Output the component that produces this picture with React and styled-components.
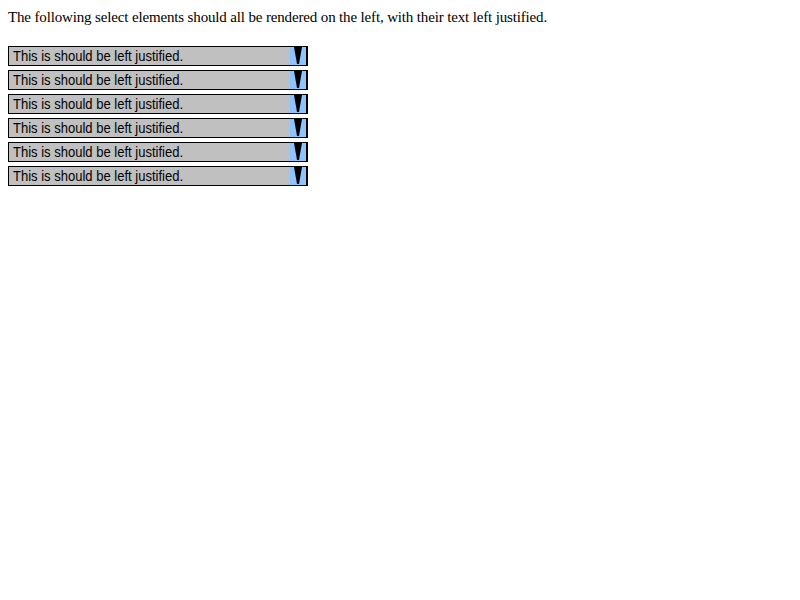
import React from "react";
import styled, { createGlobalStyle } from "styled-components";

const Global = createGlobalStyle`
  html, body { margin: 0; padding: 0; background: #fff; }
  body { padding: 8px; font-family: "Liberation Serif", "Times New Roman", serif; font-size: 16px; color: #000; }
`;

const Intro = styled.p`
  margin: 0 0 20px 0;
  line-height: 18px;
  font-size: 15px;
  letter-spacing: -0.15px;
`;

const List = styled.div`
  display: flex;
  flex-direction: column;
  align-items: flex-start;
  gap: 4px;
`;

const Select = styled.div`
  box-sizing: border-box;
  width: 300px;
  height: 20px;
  border: 1px solid #000;
  background: #c0c0c0;
  display: flex;
  align-items: stretch;
`;

const Label = styled.span`
  flex: 1;
  padding-left: 4px;
  overflow: hidden;
`;

const LabelText = styled.span`
  display: inline-block;
  font-family: "Liberation Sans", Arial, sans-serif;
  font-size: 14px;
  line-height: 18px;
  color: #000;
  white-space: nowrap;
  transform: scaleX(0.93);
  transform-origin: left center;
`;

const Arrow = styled.svg`
  display: block;
  width: 17px;
  height: 18px;
  flex: none;
`;

function DropArrow() {
  return (
    <Arrow viewBox="0 0 17 18">
      <rect x="0" y="0" width="17" height="18" fill="#000" />
      <rect x="0" y="0" width="16" height="18" fill="#8cc4ff" />
      <polygon points="4,0 12,0 9,17 7,17" fill="#000" />
    </Arrow>
  );
}

export default function App() {
  const items = Array.from({ length: 6 });
  return (
    <>
      <Global />
      <Intro>
        The following select elements should all be rendered on the left, with their text left justified.
      </Intro>
      <List>
        {items.map((_, i) => (
          <Select key={i}>
            <Label>
              <LabelText>This is should be left justified.</LabelText>
            </Label>
            <DropArrow />
          </Select>
        ))}
      </List>
    </>
  );
}
